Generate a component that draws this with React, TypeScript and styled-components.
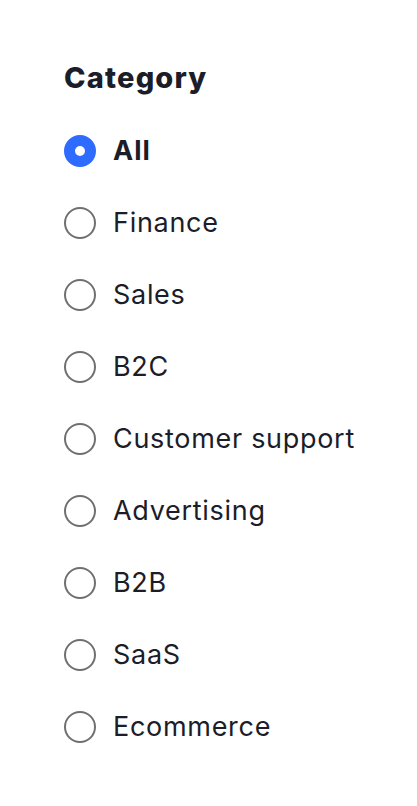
import React, { useState } from "react";
import styled, { createGlobalStyle } from "styled-components";

const Global = createGlobalStyle`
  html, body { margin: 0; padding: 0; background: #ffffff; }
  body { font-family: Inter, "Noto Sans", sans-serif; -webkit-font-smoothing: antialiased; }
`;

const Panel = styled.fieldset`
  border: none;
  margin: 0;
  padding: 58px 0 0 64px;
  display: flex;
  flex-direction: column;
`;

const Title = styled.legend`
  float: left;
  padding: 0;
  margin: 0 0 17px 0;
  font-size: 29px;
  font-weight: 800;
  color: #1b1d29;
  line-height: 40px;
  letter-spacing: 1.2px;
`;

const List = styled.div`
  display: flex;
  flex-direction: column;
  clear: both;
`;

const Row = styled.label`
  display: flex;
  align-items: center;
  gap: 17px;
  height: 72px;
  cursor: pointer;
`;

const Radio = styled.span<{ $checked: boolean }>`
  box-sizing: border-box;
  width: 32px;
  height: 32px;
  border-radius: 50%;
  flex: none;
  border: ${(p) => (p.$checked ? "11px solid #2e6bff" : "2px solid #707070")};
  background: #ffffff;
`;

const HiddenInput = styled.input`
  position: absolute;
  opacity: 0;
  width: 0;
  height: 0;
`;

const Label = styled.span<{ $checked: boolean }>`
  font-size: 27px;
  font-weight: ${(p) => (p.$checked ? 700 : 400)};
  color: #1b1d29;
  line-height: 32px;
  letter-spacing: ${(p) => (p.$checked ? "1px" : "0.7px")};
`;

const items = [
  "All",
  "Finance",
  "Sales",
  "B2C",
  "Customer support",
  "Advertising",
  "B2B",
  "SaaS",
  "Ecommerce",
];

export default function App() {
  const [value, setValue] = useState("All");
  return (
    <>
      <Global />
      <Panel>
        <Title>Category</Title>
        <List>
          {items.map((it) => (
            <Row key={it}>
              <HiddenInput
                type="radio"
                name="category"
                checked={value === it}
                onChange={() => setValue(it)}
              />
              <Radio $checked={value === it} />
              <Label $checked={value === it}>{it}</Label>
            </Row>
          ))}
        </List>
      </Panel>
    </>
  );
}
